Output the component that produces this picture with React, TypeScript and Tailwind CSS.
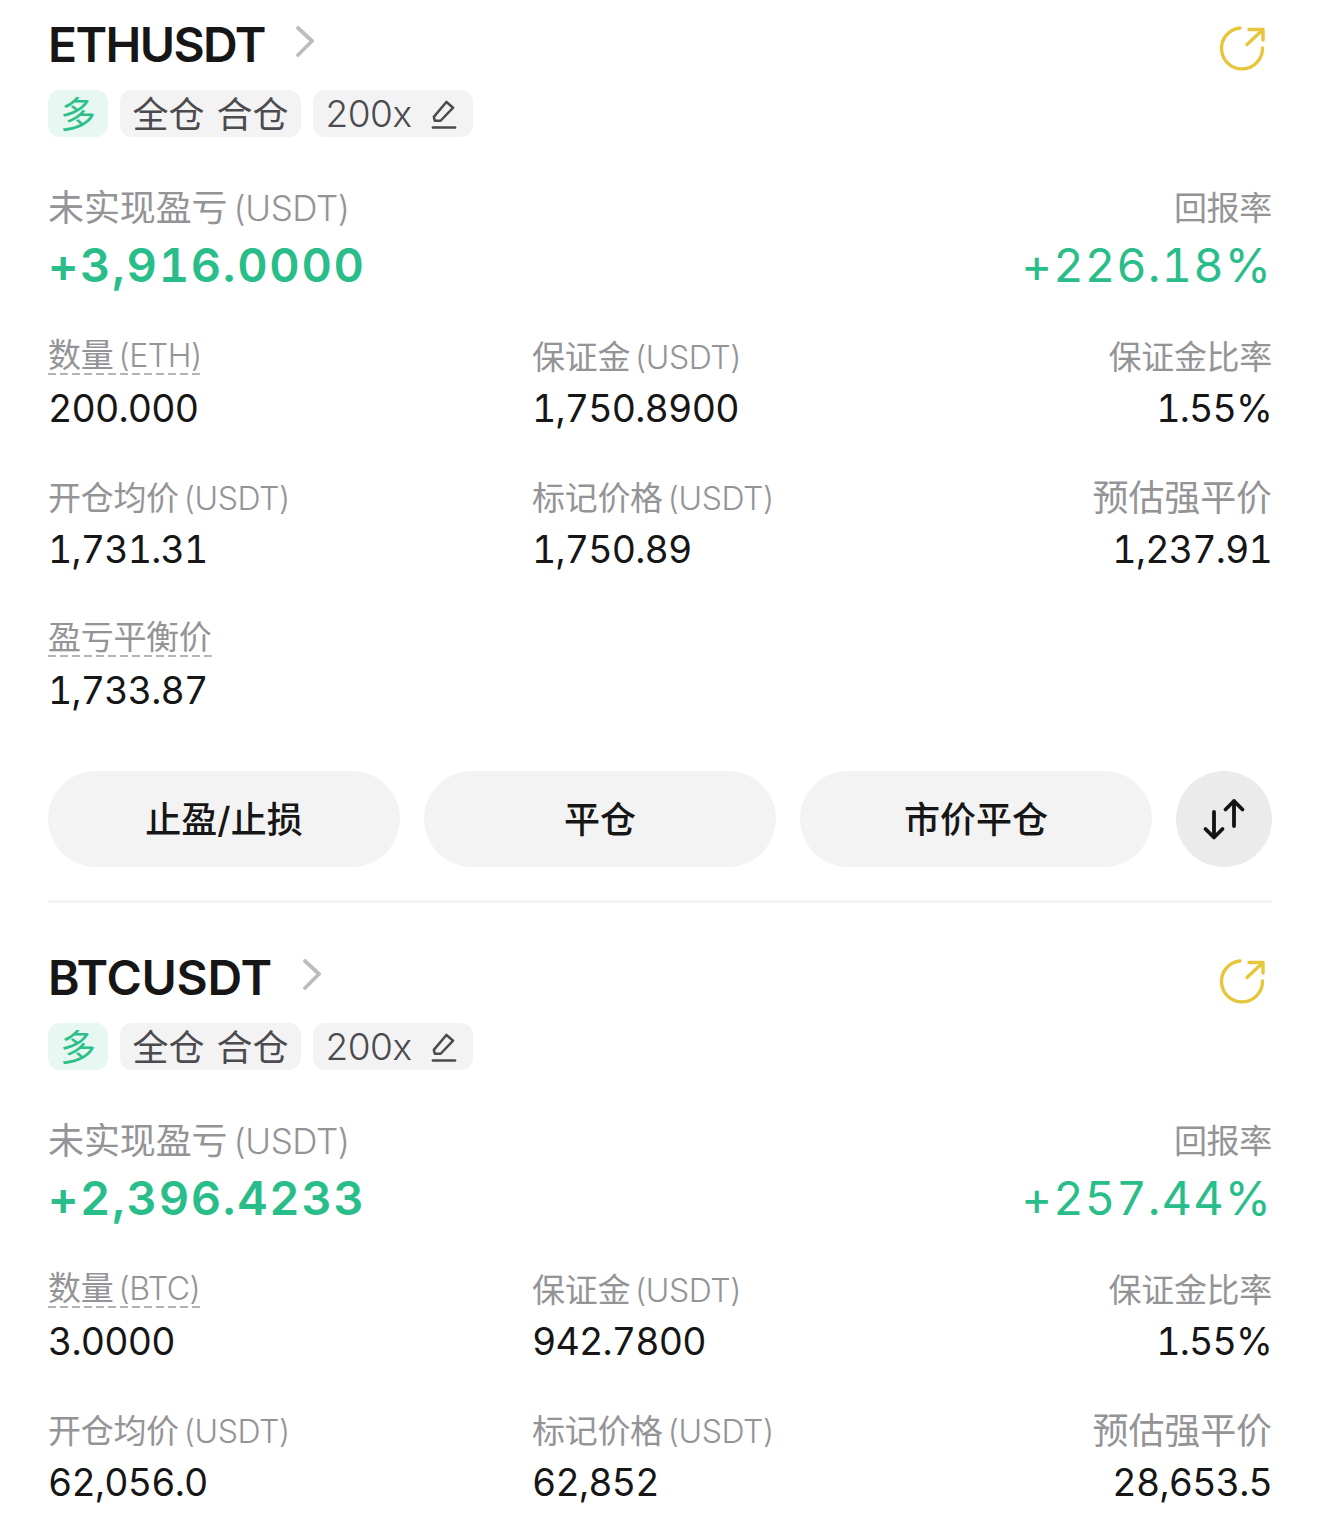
const fontStack = "font-['Inter','Noto_Sans_CJK_SC',sans-serif]";

type Cell = { label: string; unit?: string; value: string; dashed?: boolean; large?: boolean };

type Position = {
  symbol: string;
  titleClass: string;
  pnl: string;
  roe: string;
  showActions: boolean;
  rows: Cell[][];
};

const positions: Position[] = [
  {
    symbol: "ETHUSDT",
    titleClass: "tracking-[-1.6px]",
    pnl: "+3,916.0000",
    roe: "+226.18%",
    showActions: true,
    rows: [
      [
        { label: "数量", unit: "(ETH)", value: "200.000", dashed: true },
        { label: "保证金", unit: "(USDT)", value: "1,750.8900" },
        { label: "保证金比率", value: "1.55%" },
      ],
      [
        { label: "开仓均价", unit: "(USDT)", value: "1,731.31" },
        { label: "标记价格", unit: "(USDT)", value: "1,750.89" },
        { label: "预估强平价", value: "1,237.91", large: true },
      ],
      [{ label: "盈亏平衡价", value: "1,733.87", dashed: true }],
    ],
  },
  {
    symbol: "BTCUSDT",
    titleClass: "tracking-[-0.3px]",
    pnl: "+2,396.4233",
    roe: "+257.44%",
    showActions: false,
    rows: [
      [
        { label: "数量", unit: "(BTC)", value: "3.0000", dashed: true },
        { label: "保证金", unit: "(USDT)", value: "942.7800" },
        { label: "保证金比率", value: "1.55%" },
      ],
      [
        { label: "开仓均价", unit: "(USDT)", value: "62,056.0" },
        { label: "标记价格", unit: "(USDT)", value: "62,852" },
        { label: "预估强平价", value: "28,653.5", large: true },
      ],
    ],
  },
];

function ShareIcon() {
  return (
    <svg className="mr-[5px] mt-[5px]" width="48" height="48" viewBox="0 0 48 48" fill="none" stroke="#e6c63c" strokeWidth="3.4" strokeLinecap="round" strokeLinejoin="round">
      <path d="M21 4A20.5 20.5 0 1 0 43.5 24" />
      <path d="M30 5.5H44V16" />
      <path d="M43.5 6L28 20.5" />
    </svg>
  );
}

function EditIcon() {
  return (
    <svg width="27" height="32" viewBox="0 0 28 32" fill="none" stroke="#4b4b4f" strokeWidth="2.6" strokeLinecap="round" strokeLinejoin="round">
      <path d="M4 19L17 3.5L24 9.5L11 23H5L4 19Z" />
      <path d="M3 30H26" />
    </svg>
  );
}

function SwapIcon() {
  return (
    <svg width="44" height="44" viewBox="0 0 44 44" fill="none" stroke="#141414" strokeWidth="3.8" strokeLinecap="round" strokeLinejoin="round">
      <path d="M12 15V40M3.5 32L12 40.5L20.5 32" />
      <path d="M32 29V4M23.5 12.5L32 4L40.5 12.5" />
    </svg>
  );
}

function Label({ cell }: { cell: Cell }) {
  const size = cell.large ? "text-[36px] tracking-[-0.1px]" : "text-[33px] tracking-[-0.3px]";
  const unitSize = cell.large ? "ml-[6px] text-[35px]" : "ml-[5px] text-[32px]";
  const dashed = cell.dashed
    ? "inline-block h-[37px] -translate-y-[2px] leading-[34px] bg-[repeating-linear-gradient(to_right,#b4b4b6_0,#b4b4b6_8px,transparent_8px,transparent_12px)] bg-[length:100%_2px] bg-bottom bg-no-repeat"
    : "";
  return (
    <div className={`h-[40px] leading-[40px] text-[#949497] ${size}`}>
      <span className={dashed}>
        {cell.label}
        {cell.unit && <span className={`font-light tracking-[-0.4px] ${unitSize}`}>{cell.unit}</span>}
      </span>
    </div>
  );
}

function PositionCard({ position }: { position: Position }) {
  return (
    <section className="h-[933px] shrink-0">
      <div className="flex h-[90px] items-center justify-between">
        <div className="flex items-center">
          <h2 className={`mb-[1px] text-[48px] font-semibold leading-[56px] text-[#161616] ${position.titleClass}`}>
            {position.symbol}
          </h2>
          <svg className="ml-[30px] -mt-[6px]" width="20" height="32" viewBox="0 0 20 32" fill="none" stroke="#bdbdbd" strokeWidth="3.8" strokeLinecap="round" strokeLinejoin="round">
            <path d="M3 2L17 15L3 29" />
          </svg>
        </div>
        <ShareIcon />
      </div>

      <div className="flex h-[47px] gap-[12px] text-[36px] leading-[46px]">
        <span className="flex w-[60px] items-center justify-center rounded-[12px] bg-[#e6f8f1] pt-[2px] text-[#2cbf8a]">多</span>
        <span className="flex w-[181px] items-center justify-center gap-[12px] rounded-[12px] bg-[#f3f3f3] pt-[2px] text-[#4b4b4f]">
          <span>全仓</span>
          <span>合仓</span>
        </span>
        <span className="flex w-[160px] items-center justify-center gap-[18px] rounded-[12px] bg-[#f3f3f3] pr-[4px] text-[#4b4b4f]">
          <span className="text-[37px] font-light tracking-[-0.5px]">200x</span>
          <EditIcon />
        </span>
      </div>

      <div className="mt-[51px] flex justify-between">
        <div>
          <Label cell={{ label: "未实现盈亏", unit: "(USDT)", value: "", large: true }} />
          <div className="mt-[5px] text-[47px] font-semibold leading-[64px] tabular-nums tracking-[1.7px] text-[#28bd89]">{position.pnl}</div>
        </div>
        <div className="text-right">
          <Label cell={{ label: "回报率", value: "" }} />
          <div className="mt-[5px] text-[47px] leading-[64px] tabular-nums tracking-[1.1px] text-[#28bd89]">{position.roe}</div>
        </div>
      </div>

      <div className="mt-[40px] flex flex-col gap-[49px]">
        {position.rows.map((row, i) => (
          <div key={i} className="grid grid-cols-[484px_1fr_auto]">
            {row.map((cell, j) => (
              <div key={j} className={j === 2 ? "text-right" : ""}>
                <Label cell={cell} />
                <div className="mt-[12px] text-[37.5px] leading-[40px] tabular-nums tracking-[-0.8px] text-[#161616]">{cell.value}</div>
              </div>
            ))}
          </div>
        ))}
      </div>

      {position.showActions && (
        <div className="mt-[60px] flex gap-[24px]">
          {["止盈/止损", "平仓", "市价平仓"].map((text) => (
            <button key={text} type="button" className="flex h-[96px] w-[352px] items-center justify-center rounded-full bg-[#f3f3f3] pt-[2px] text-[36px] font-medium text-[#161616]">
              {text}
            </button>
          ))}
          <button type="button" className="flex size-[96px] items-center justify-center rounded-full bg-[#ebebeb]">
            <SwapIcon />
          </button>
        </div>
      )}

      {position.showActions && <div className="mt-[33px] h-[3px] bg-[#f3f3f3]" />}
    </section>
  );
}

export default function App() {
  return (
    <div className={`flex h-[1528px] flex-col overflow-hidden bg-white px-[48px] ${fontStack}`}>
      {positions.map((position) => (
        <PositionCard key={position.symbol} position={position} />
      ))}
    </div>
  );
}
